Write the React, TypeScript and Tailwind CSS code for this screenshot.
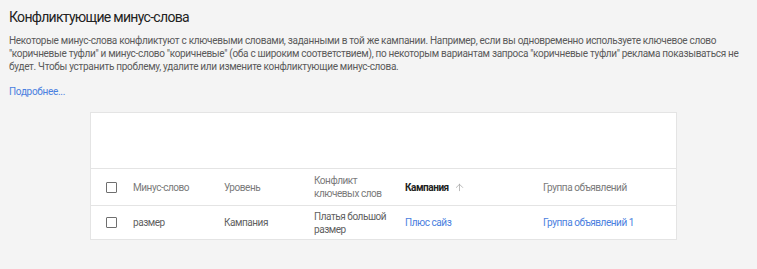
import { ArrowUp } from 'lucide-react'

function Checkbox() {
  return <span className="block h-[11px] w-[11px] rounded-[1px] border-[1.5px] border-[#6f6f6f] bg-white" />
}

const cols = 'grid-cols-[42px_91px_90px_91px_138px_1fr]'

export default function App() {
  return (
    <div className="h-[269px] w-[757px] overflow-hidden bg-[#f4f4f4] font-['Roboto',sans-serif]">
      <div className="px-[9px] pt-[8px]">
        <h1 className="text-[14px] leading-[18px] font-normal tracking-[-0.7px] text-[#222]">Конфликтующие минус-слова</h1>
        <p className="mt-[8px] whitespace-nowrap text-[10px] leading-[13px] tracking-[-0.3px] text-[#5a5a5a]">
          Некоторые минус-слова конфликтуют с ключевыми словами, заданными в той же кампании. Например, если вы одновременно используете ключевое слово
          <br />
          "коричневые туфли" и минус-слово "коричневые" (оба с широким соответствием), по некоторым вариантам запроса "коричневые туфли" реклама показываться не
          <br />
          будет. Чтобы устранить проблему, удалите или измените конфликтующие минус-слова.
        </p>
        <a className="mt-[12px] block text-[10px] leading-[13px] tracking-[-0.3px] text-[#4a80e0]">Подробнее...</a>
      </div>

      <div className="ml-[90px] mt-[14px] w-[587px] border border-[#e4e4e4] bg-white">
        <div className="h-[55px]" />
        <div className={`grid h-[37px] ${cols} items-center border-t border-[#e4e4e4] text-[10px] leading-[13px] tracking-[-0.45px] text-[#7a7a7a]`}>
          <div className="pl-[15px]"><Checkbox /></div>
          <div>Минус-слово</div>
          <div>Уровень</div>
          <div>Конфликт<br />ключевых слов</div>
          <div className="flex items-center gap-[5px] font-bold text-[#212121]">
            Кампания
            <ArrowUp className="h-[11px] w-[11px] text-[#9e9e9e]" strokeWidth={1.5} />
          </div>
          <div>Группа объявлений</div>
        </div>
        <div className={`grid h-[34px] ${cols} items-center border-t border-[#e4e4e4] text-[10px] leading-[13px] tracking-[-0.45px] text-[#5f5f5f]`}>
          <div className="pl-[15px]"><Checkbox /></div>
          <div>размер</div>
          <div>Кампания</div>
          <div>Платья большой<br />размер</div>
          <div className="text-[#4a80e0]">Плюс сайз</div>
          <div className="text-[#4a80e0]">Группа объявлений 1</div>
        </div>
      </div>
    </div>
  )
}
